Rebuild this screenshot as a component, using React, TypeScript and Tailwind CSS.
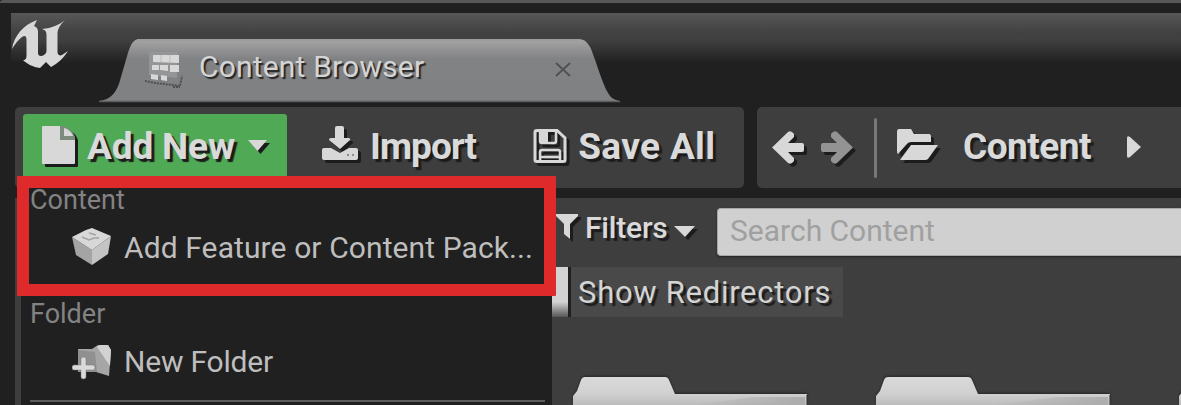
import type { ReactNode } from 'react';

const iconShadow = 'shrink-0 overflow-visible drop-shadow-[3px_3px_0_#1c1c1c]';
const toolText = "whitespace-pre text-[37px] leading-[44px] font-bold text-[#dadada] [text-shadow:3px_3px_1px_#1c1c1c]";

function EngineLogo() {
  return (
    <svg className="mt-[7px] ml-[1px] h-[48px] w-[57px] shrink-0" viewBox="0 0 57 48">
      <path
        fill="#d8d8d8"
        d="M0 29C2 16 11 5 25 0L22 6C25 7 26 9 26 12V33C26 36 29 37 32 35C33 34 34.500 33 34.500 31V15C34.500 11 33 10 30 9C40 8 47 5 53 0C48 5 45.500 9 45.500 14V32C45.500 35 48 36 50 35L56 31C51 39 46 43 39 47L34 42L28 48C21 47 15 44 11 40C14 40 14.500 38 14.500 35V20C14.500 16 13 15 10 17C6 20 3 24 0 29Z"
      />
    </svg>
  );
}

function BrowserIcon() {
  return (
    <svg className="h-[40px] w-[42px] shrink-0" viewBox="0 0 42 40">
      <path d="M4 2H33L32 28L4 25Z" fill="#949596" />
      <path d="M8 5H34V13L8 12ZM7 15H14V20L7 20ZM15 15H23V21L15 20ZM25 15H34V22L25 22ZM6 24L13 25V30L6 29ZM16 25L22 26V31L16 30Z" fill="#d8d8d8" />
      <path d="M16 5V12M25 5V12" stroke="#bcbcbc" strokeWidth="1" />
      <path d="M0 31L10 33L28 35L35 36L37 26M28 37H35" fill="none" stroke="#505050" strokeWidth="2" strokeDasharray="2 1" />
    </svg>
  );
}

function Tab() {
  return (
    <div className="relative mt-[26px] ml-[30px] h-[64px] w-[521px]">
      <svg className="absolute inset-0" width="521" height="64" viewBox="0 0 522 64">
        <defs>
          <linearGradient id="tab" x1="0" y1="0" x2="0" y2="1">
            <stop offset="0" stopColor="#a6a6a7" />
            <stop offset="0.12" stopColor="#989899" />
            <stop offset="0.32" stopColor="#818284" />
            <stop offset="1" stopColor="#808183" />
          </linearGradient>
        </defs>
        <path d="M0 62C11 61 16 55 20 45L29 14C32 5 34 1 40 0H480C487 0 490 4 493 10C500 28 504 44 510 54C513 59 516 61 522 62Z" fill="url(#tab)" />
        <path d="M38 1H481" stroke="#9d9d9e" strokeWidth="2" />
        <path d="M0 62.5H522" stroke="#5c5d5e" strokeWidth="1.5" />
      </svg>
      <div className="relative flex h-full items-start pt-[11px] pl-[46px]">
        <BrowserIcon />
        <span className="ml-[12px] w-[356px] text-[30px] leading-[34px] tracking-[0.18px] whitespace-pre text-[#d4d4d4] [text-shadow:2px_2px_1px_#252525]">
          Content Browser
        </span>
        <svg className="mt-[12px] h-[15px] w-[16px]" viewBox="0 0 16 15">
          <path d="M1 1L15 14M15 1L1 14" stroke="#505050" strokeWidth="1.8" />
        </svg>
      </div>
    </div>
  );
}

function NewFileIcon() {
  return (
    <svg className={`${iconShadow} h-[38px] w-[33px]`} viewBox="0 0 33 38">
      <path d="M1 0H18V14H33V37Q33 38 32 38H1Q0 38 0 37V1Q0 0 1 0Z" fill="#d8d8d8" />
      <path d="M18 0H20Q30 2 33 11V14H18Z" fill="#7d8b7e" />
      <path d="M22 2V10H31C30 6 26 3 22 2Z" fill="#d8d8d8" />
    </svg>
  );
}

function ImportIcon() {
  return (
    <svg className={`${iconShadow} h-[34px] w-[36px]`} viewBox="0 0 36 34">
      <path d="M13 2Q13 0 15 0H20Q22 0 22 2V12H27Q29 13 28 14L18 23L7 14Q7 12 9 12H13Z" fill="#d8d8d8" />
      <path d="M2 22H9L18 27L27 22H34Q36 22 36 24V32Q36 34 34 34H2Q0 34 0 32V24Q0 22 2 22Z" fill="#d8d8d8" />
      <path d="M25 29H27M30 29H32" stroke="#777" strokeWidth="1.5" />
    </svg>
  );
}

function SaveIcon() {
  return (
    <svg className={`${iconShadow} h-[34px] w-[34px]`} viewBox="0 0 34 34" fill="none" stroke="#d8d8d8" strokeWidth="3">
      <path d="M2 3Q2 1.5 4 1.5H24L32 9V31Q32 32.5 30 32.5H4Q2 32.5 2 31Z" />
      <path d="M7 32V23Q7 21 9 21H25Q27 21 27 23V32M7 28H27" strokeWidth="2.5" />
      <path d="M7 2V12Q7 14 9 14H21Q23 14 23 12V2" strokeWidth="2.5" />
      <path d="M7 3H15V13H8Z" fill="#d8d8d8" stroke="none" />
    </svg>
  );
}

function Arrow({ flip, color }: { flip?: boolean; color: string }) {
  return (
    <svg className={`${iconShadow} h-[33px] w-[32px]`} viewBox="0 0 32 33">
      <path
        transform={flip ? 'translate(32 0) scale(-1 1)' : undefined}
        d="M16 1Q19-1 22 3V6L16 12H30Q32 12 32 14V19Q32 21 30 21H16L22 27V30Q19 34 16 32L0 16.500Z"
        fill={color}
      />
    </svg>
  );
}

function OpenFolderIcon() {
  return (
    <svg className={`${iconShadow} h-[31px] w-[41px]`} viewBox="0 0 41 31">
      <path d="M2 0H14L17 5H32Q34 5 34 8V13H14Q11 13 9 16L1 25Q0 25 0 22V3Q0 0 2 0Z" fill="#d8d8d8" />
      <path d="M14 16H41L31 30Q30 31 28 31H3Z" fill="#d8d8d8" />
    </svg>
  );
}

function PackIcon() {
  return (
    <svg className="h-[37px] w-[39px] shrink-0" viewBox="0 0 39 37">
      <path d="M0 9L20 22V37L4 27Z" fill="#a4a4a4" />
      <path d="M39 8L36 26L20 37V22Z" fill="#c4c4c4" />
      <path d="M0 9L14 2L20 0L39 8L20 22Z" fill="#d8d8d8" />
      <path d="M10 9L17 12L22 10L27 10M17 5L24 7" stroke="#a3a3a3" strokeWidth="1.6" fill="none" />
    </svg>
  );
}

function AddFolderIcon() {
  return (
    <svg className="h-[35px] w-[40px] shrink-0" viewBox="0 0 40 35">
      <path d="M6 4H20L26 0H36L39 5L37 31L24 27H6Z" fill="#a6a6a6" />
      <path d="M25 2L28 0H36L39 5L38 21Z" fill="#d2d2d2" />
      <path d="M6 5L23 7L25 27H6Z" fill="#909090" />
      <path d="M9 14Q9 12 11.500 12T14 14V20H21Q23 20 23 22.500T21 25H14V32Q14 34 11.500 34T9 32V25H2Q0 25 0 22.500T2 20H9Z" fill="#dadada" stroke="#777" strokeWidth="0.5" />
    </svg>
  );
}

function LargeFolder() {
  return (
    <svg className="h-[28px] w-[234px] shrink-0 overflow-visible drop-shadow-[0_-1px_1px_#252525]" viewBox="0 0 234 28">
      <defs>
        <linearGradient id="folder" x1="0" y1="0" x2="0" y2="1">
          <stop offset="0" stopColor="#dadada" />
          <stop offset="0.6" stopColor="#d0d0d0" />
          <stop offset="1" stopColor="#bcbcbc" />
        </linearGradient>
        <linearGradient id="folderSide" x1="0" y1="0" x2="1" y2="0.2">
          <stop offset="0" stopColor="#b2b2b2" stopOpacity="0" />
          <stop offset="1" stopColor="#adadad" />
        </linearGradient>
      </defs>
      <path d="M0 28V19L4 14L8 3Q9 0 12 0H92Q95 0 96 3L102 17H234V28Z" fill="url(#folder)" />
      <path d="M120 28L180 20H232V28Z" fill="url(#folderSide)" />
      <path d="M233.500 18V28" stroke="#777" strokeWidth="1" />
    </svg>
  );
}

function MenuSection({ title, children }: { title: string; children: ReactNode }) {
  return (
    <section className="flex h-[114px] shrink-0 flex-col">
      <h2 className="h-[30px] text-[27px] leading-[30px] text-[#838383]">{title}</h2>
      {children}
    </section>
  );
}

export default function App() {
  return (
    <div className="relative flex h-[405px] w-[1181px] flex-col overflow-hidden bg-[#202020] font-['Roboto','Liberation_Sans',sans-serif]">
      <div className="h-[3px] shrink-0 rounded-tl bg-[#575757]" />
      <header className="mt-[10px] ml-[11px] flex h-[94px] shrink-0 items-start bg-[linear-gradient(to_bottom,#575757_0px,#414141_20px,#404040_27px,#202020_50px)]">
        <EngineLogo />
        <Tab />
      </header>

      <div className="ml-[15px] flex h-[81px] shrink-0 gap-[13px]">
        <div className="flex w-[729px] items-start rounded-[5px] bg-[#3e3e3e] pl-[8px]">
          <button className="mt-[7px] flex h-[74px] w-[264px] items-start rounded-t-[3px] bg-[#50a954] pt-[12px] pl-[19px]">
            <NewFileIcon />
            <span className={`${toolText} -mt-px ml-[12px] w-[161px] text-left tracking-[-0.15px]`}>Add New</span>
            <svg className={`${iconShadow} mt-[14px] h-[11px] w-[19px]`} viewBox="0 0 19 11">
              <path d="M0 0H19L9.500 11Z" fill="#d8d8d8" />
            </svg>
          </button>
          <button className="mt-[18px] ml-[35px] flex items-start">
            <span className="mt-px flex"><ImportIcon /></span>
            <span className={`${toolText} ml-[12px] text-left tracking-[-0.9px]`}>Import</span>
          </button>
          <button className="mt-[18px] ml-[57px] flex items-start">
            <span className="mt-[4px] flex"><SaveIcon /></span>
            <span className={`${toolText} ml-[11px] text-left tracking-[0.35px]`}>Save All</span>
          </button>
        </div>
        <nav className="flex grow items-start rounded-l-[5px] bg-[#3e3e3e] pl-[15px]">
          <div className="mt-[24px] flex gap-[17px]">
            <Arrow color="#d8d8d8" />
            <Arrow flip color="#939393" />
          </div>
          <div className="mt-[11px] ml-[21px] h-[60px] w-[3px] rounded bg-[#787878]" />
          <div className="mt-[22px] ml-[20px] flex"><OpenFolderIcon /></div>
          <span className={`${toolText} mt-[18px] ml-[25px] w-[133px] tracking-[-0.5px]`}>Content</span>
          <svg className="mt-[29px] ml-[31px] h-[22px] w-[14px]" viewBox="0 0 14 22">
            <path d="M0 2Q0-1 3 1L14 11L3 21Q0 23 0 20Z" fill="#d8d8d8" />
          </svg>
        </nav>
      </div>

      <main className="mt-[10px] ml-[15px] flex h-[207px] shrink-0 flex-col bg-[#3e3e3e]">
        <div className="flex h-[60px] items-start pt-[10px] pl-[541px]">
          <svg className={`${iconShadow} mt-[6px] h-[25px] w-[22px]`} viewBox="0 0 22 25">
            <path d="M0 0H22V2L14 10V25L8 20V10L0 2Z" fill="#d8d8d8" />
          </svg>
          <span className="ml-[7px] w-[89px] text-[30px] leading-[39px] font-medium tracking-[-0.2px] text-[#dadada] [text-shadow:3px_3px_1px_#1c1c1c]">Filters</span>
          <svg className={`${iconShadow} mt-[18px] h-[11px] w-[21px]`} viewBox="0 0 21 11">
            <path d="M0 0H21L11 11Z" fill="#d8d8d8" />
          </svg>
          <div className="ml-[22px] h-[48px] grow rounded-l-[4px] border-y border-l border-[#a8a8a8] bg-[#d0d0d0] pl-[12px] text-[30px] leading-[43px] text-[#a0a0a1] shadow-[0_1px_2px_#222]">Search Content</div>
        </div>
        <div className="mt-[9px] ml-[536px] flex h-[50px] w-[292px] bg-[linear-gradient(to_right,transparent_20px,#494949_20px)]">
          <div className="h-full w-[17px] shrink-0 bg-[linear-gradient(to_bottom,#d3d3d3_35px,#555_50px)] shadow-[3px_0_0_#202020]" />
          <span className="ml-[10px] text-[31px] leading-[51px] tracking-[0.72px] whitespace-pre text-[#d4d4d4] [text-shadow:3px_3px_1px_#1c1c1c]">Show Redirectors</span>
        </div>
        <div className="mt-[60px] ml-[558px] flex w-[850px] gap-[69px]">
          <LargeFolder />
          <LargeFolder />
          <LargeFolder />
        </div>
      </main>

      <aside className="absolute top-[177px] left-[21px] flex h-[228px] w-[531px] flex-col bg-[#202020] pt-[8px] pl-[9px]">
        <MenuSection title="Content">
          <div className="mt-[13px] flex items-start pl-[42px]">
            <PackIcon />
            <span className="ml-[13px] text-[30px] leading-[40px] tracking-[0.1px] whitespace-pre text-[#bebebe]">Add Feature or Content Pack...</span>
          </div>
        </MenuSection>
        <MenuSection title="Folder">
          <div className="mt-[13px] flex items-start pl-[42px]">
            <span className="mt-[3px] flex"><AddFolderIcon /></span>
            <span className="ml-[12px] text-[30px] leading-[40px] tracking-[-0.2px] whitespace-pre text-[#bebebe]">New Folder</span>
          </div>
          <div className="mt-[18px] mr-[7px] h-[2px] shrink-0 bg-[#5c5c5c]" />
        </MenuSection>
      </aside>
      <div className="absolute top-[176px] left-[17px] h-[120px] w-[539px] rounded-[1px] border-[12px] border-[#de2a2a]" />
    </div>
  );
}
